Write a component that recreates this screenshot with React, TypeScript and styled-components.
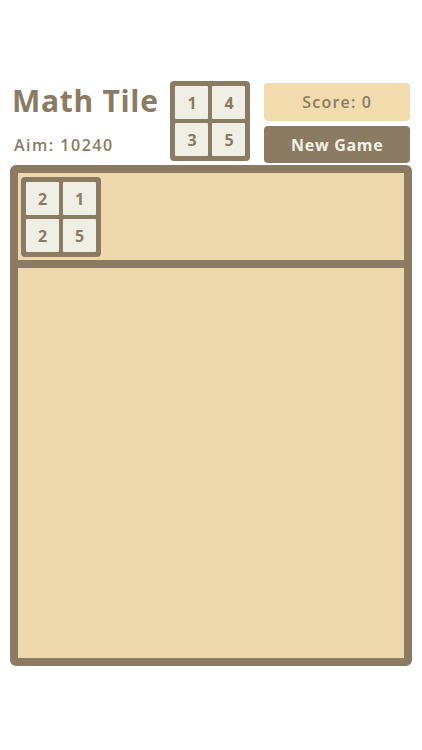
import styled, { createGlobalStyle } from 'styled-components'

const brown = '#8a7b62'
const sand = '#eed8ad'
const tileBg = '#f0efe6'

const GlobalStyle = createGlobalStyle`
	html, body {
		margin: 0;
		padding: 0;
		background: #ffffff;
	}
	body {
		font-family: 'Open Sans', 'DejaVu Sans', sans-serif;
		color: ${brown};
	}
`

const Page = styled.main`
	min-height: 100vh;
	display: flex;
	flex-direction: column;
	align-items: center;
	justify-content: center;
	padding-bottom: 3px;
	box-sizing: border-box;
`

const Wrapper = styled.div`
	width: 402px;
	display: flex;
	flex-direction: column;
	gap: 2px;
`

const Header = styled.header`
	display: flex;
	align-items: stretch;
	padding: 0 2px;
	height: 82px;
`

const TitleBlock = styled.div`
	width: 159px;
	display: flex;
	flex-direction: column;
	justify-content: space-between;
	padding: 2px 0 7px;
	box-sizing: border-box;
`

const Title = styled.h1`
	margin: 0;
	font-size: 30px;
	font-weight: 700;
	line-height: 36px;
	letter-spacing: 0.7px;
	white-space: nowrap;
`

const Aim = styled.p`
	margin: 0 0 0 2px;
	font-size: 16px;
	font-weight: 600;
	letter-spacing: 1.5px;
`

const TileGrid = styled.div<{ $cell: number; $gap: number }>`
	display: grid;
	grid-template-columns: repeat(2, ${({ $cell }) => $cell}px);
	grid-auto-rows: ${({ $cell }) => $cell}px;
	gap: ${({ $gap }) => $gap}px;
	padding: 5px;
	background: ${brown};
	border-radius: 4px;
	width: fit-content;
	height: fit-content;
`

const Tile = styled.div`
	background: ${tileBg};
	display: grid;
	place-content: center;
	font-size: 16px;
	font-weight: 700;
	color: ${brown};
	border-radius: 1px;
`

const Controls = styled.div`
	width: 146px;
	margin-left: 14px;
	display: flex;
	flex-direction: column;
	justify-content: space-between;
	padding: 2px 0 0;
`

const ScoreBox = styled.div`
	height: 38px;
	border-radius: 4px;
	background: #f2dcae;
	display: grid;
	place-content: center;
	font-size: 16px;
	font-weight: 600;
	letter-spacing: 1.2px;
`

const NewGameButton = styled.button`
	height: 37px;
	border: none;
	border-radius: 4px;
	background: ${brown};
	color: #f5f1e6;
	font-family: inherit;
	font-size: 16px;
	font-weight: 700;
	letter-spacing: 0.7px;
	cursor: pointer;
`

const Board = styled.section`
	height: 501px;
	box-sizing: border-box;
	border: 8px solid ${brown};
	border-radius: 6px;
	background: ${brown};
	display: flex;
	flex-direction: column;
	gap: 8px;
`

const Tray = styled.div`
	height: 87px;
	background: ${sand};
	padding: 4px 3px;
	box-sizing: border-box;
`

const Field = styled.div`
	flex: 1;
	background: ${sand};
`

export default function App() {
	const target = [1, 4, 3, 5]
	const piece = [2, 1, 2, 5]

	return (
		<Page>
			<GlobalStyle />
			<Wrapper>
				<Header>
					<TitleBlock>
						<Title>Math Tile</Title>
						<Aim>Aim: 10240</Aim>
					</TitleBlock>
					<TileGrid $cell={33} $gap={4}>
						{target.map((n, i) => (
							<Tile key={i}>{n}</Tile>
						))}
					</TileGrid>
					<Controls>
						<ScoreBox>Score: 0</ScoreBox>
						<NewGameButton>New Game</NewGameButton>
					</Controls>
				</Header>
				<Board>
					<Tray>
						<TileGrid $cell={33} $gap={4}>
							{piece.map((n, i) => (
								<Tile key={i}>{n}</Tile>
							))}
						</TileGrid>
					</Tray>
					<Field />
				</Board>
			</Wrapper>
		</Page>
	)
}
